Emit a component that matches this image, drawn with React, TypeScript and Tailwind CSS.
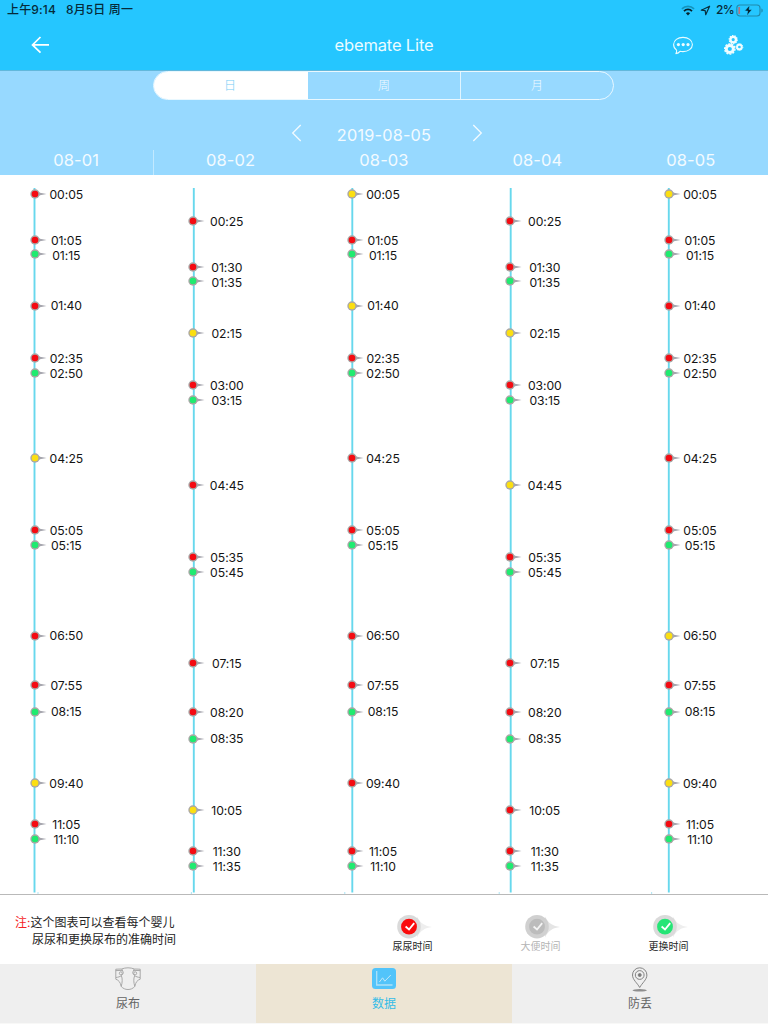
import React from "react";

type Kind = "pee" | "poo" | "change";
type Slot = { time: string; dot: number; text: number };

const FILL: Record<Kind, string> = { pee: "#f40b12", poo: "#fbdf12", change: "#1feb70" };

const CHART_TOP = 175;
const ROW = 14;

const slots = (rows: [string, number, number][]): Slot[] =>
  rows.map(([time, dot, text]) => ({ time, dot, text }));

const EARLY = slots([
  ["00:05", 193.5, 195], ["01:05", 240.3, 240.5], ["01:15", 254.3, 255.5],
  ["01:40", 306, 306], ["02:35", 358, 358.3], ["02:50", 373, 373.5],
  ["04:25", 458.2, 458.7], ["05:05", 530.3, 530.7], ["05:15", 545, 545.5],
  ["06:50", 635.6, 636], ["07:55", 685.3, 685.6], ["08:15", 711.6, 712],
  ["09:40", 782.6, 783.8], ["11:05", 824, 824.3], ["11:10", 838.6, 839.3],
]);

const EARLY_MID: Slot[] = [
  ...EARLY.slice(0, 13),
  ...slots([["11:05", 850.8, 851.2], ["11:10", 865.6, 866.2]]),
];

const LATE = slots([
  ["00:25", 220.7, 222], ["01:30", 267.3, 267.6], ["01:35", 281.4, 282.6],
  ["02:15", 332.8, 333.3], ["03:00", 385.1, 385.5], ["03:15", 400.1, 400.6],
  ["04:45", 485.3, 485.8], ["05:35", 557.2, 557.6], ["05:45", 572.1, 572.6],
  ["07:15", 662.8, 663.3], ["08:20", 712.3, 712.8], ["08:35", 738.6, 739.1],
  ["10:05", 809.6, 811], ["11:30", 850.8, 851.2], ["11:35", 865.6, 866.2],
]);

const CHANGES = [2, 5, 8, 11, 14];

// `left` is the centre of the axis, `label` the centre of the times beside it.
const COLUMNS = [
  { left: 34.5, label: 66, rows: EARLY, poo: [6, 12], foot: 38 },
  { left: 193.4, label: 226.5, rows: LATE, poo: [3, 12], foot: 191 },
  { left: 352.5, label: 382.7, rows: EARLY_MID, poo: [0, 3], foot: 345 },
  { left: 510.5, label: 544.5, rows: LATE, poo: [3, 6], foot: 499 },
  { left: 669.2, label: 699.7, rows: EARLY, poo: [0, 9, 12], foot: 652 },
];

function StatusBar() {
  return (
    <div className="flex h-5 items-center justify-between pl-[7px] pr-[5px] text-[#062b3a]">
      <div className="flex gap-[10px] text-[12px] font-medium leading-5 tracking-[0.15px]">
        <span>上午9:14</span>
        <span>8月5日 周一</span>
      </div>
      <div className="flex items-center">
        <svg width="14" height="11" viewBox="0 0 14 11" fill="none">
          <path d="M.9 3.9a8.7 8.7 0 0 1 12.2 0" stroke="#1593bd" strokeWidth="1.6" />
          <path d="M3 6.1a5.7 5.7 0 0 1 8 0" stroke="#07212b" strokeWidth="1.8" />
          <path d="M4.9 8.2a3 3 0 0 1 4.2 0L7 10.5z" fill="#07212b" />
        </svg>
        <svg className="ml-[5px]" width="11" height="11" viewBox="0 0 11 11" fill="none">
          <path d="M9.6 1.2 1.3 5.2l3.9.5.5 4z" stroke="#07303f" strokeWidth="1.2" strokeLinejoin="round" />
        </svg>
        <span className="ml-[5px] w-[17px] text-[12px] font-medium leading-5 tracking-[-0.6px]">2%</span>
        <svg className="ml-[3px]" width="27" height="13" viewBox="0 0 27 13" fill="none">
          <rect x=".8" y="1" width="23.2" height="11" rx="3" stroke="#2089ab" strokeWidth="1.1" />
          <path d="M3.2 3v7" stroke="#b57280" strokeWidth="1.7" />
          <path d="M25.4 4.5v4c1-.4 1.3-1 1.3-2s-.3-1.6-1.3-2z" fill="#2089ab" />
          <path d="M13.8 1 8.7 7h3l-1 5L16 5.500h-3z" fill="#07212b" stroke="#25c6ff" strokeWidth=".6" />
        </svg>
      </div>
    </div>
  );
}

function ChatIcon() {
  return (
    <svg className="mt-[2px]" width="22" height="20" viewBox="0 0 22 20" fill="none">
      <path d="M11 1.4c5.2 0 9.4 3 9.4 7.1s-4.2 7.1-9.4 7.1c-1.100 0-2.100-.1-3-.3-.9 1.200-2.300 2-4.100 2.300.6-.9.8-2 .7-3.500C2.700 12.800 1.600 10.800 1.600 8.500c0-4.100 4.200-7.100 9.400-7.100z" stroke="#e8fbff" strokeWidth="1.100" strokeLinejoin="round" />
      <g fill="#effcff"><circle cx="6.4" cy="8.6" r="1.6" /><circle cx="11.2" cy="8.6" r="1.6" /><circle cx="16" cy="8.6" r="1.6" /></g>
    </svg>
  );
}

function Gear({ x, y, r }: { x: number; y: number; r: number }) {
  return (
    <g>
      <circle cx={x} cy={y} r={r * 0.62} stroke="#effcff" strokeWidth={r * 0.52} />
      <circle cx={x} cy={y} r={r * 0.91} stroke="#effcff" strokeWidth={r * 0.24} pathLength={20} strokeDasharray="1.2 .8" />
    </g>
  );
}

function Header() {
  return (
    <header className="h-[71px] border-b border-[#62b8dc] bg-[#25c6ff]">
      <StatusBar />
      <div className="grid h-[50px] grid-cols-[1fr_auto_1fr] items-center">
        <svg className="ml-[31px]" width="19" height="18" viewBox="0 0 19 18" fill="none">
          <path d="M9.500 1 1.500 8.900l8 7.700M1.500 8.900H18" stroke="white" strokeWidth="1.700" />
        </svg>
        <h1 className="text-[16.5px] leading-none tracking-[-0.15px] text-[#ebfcff]">ebemate Lite</h1>
        <div className="flex items-center justify-end gap-[30px] pr-[24px]">
          <ChatIcon />
          <svg width="20" height="20" viewBox="0 0 20 20" fill="none">
            <Gear x={9.2} y={4.6} r={4.5} />
            <Gear x={5.8} y={14} r={5.7} />
            <Gear x={15.4} y={12} r={3.8} />
          </svg>
        </div>
      </div>
    </header>
  );
}

function Chevron({ flip = false }: { flip?: boolean }) {
  return (
    <svg width="11" height="18" viewBox="0 0 11 18" fill="none">
      <path d={flip ? "M1.3 1 9.3 9l-8 8" : "M9.7 1l-8 8 8 8"} stroke="#f3fbff" strokeWidth="1.3" />
    </svg>
  );
}

function DateSection() {
  return (
    <section className="flex h-[104px] flex-col items-center bg-[#97d9ff] text-[#f3fbff]">
      <div className="mr-px flex h-[29px] w-[461px] shrink-0 overflow-hidden rounded-[15px] border border-[#e9f8ff] text-[12px] font-light">
        <div className="flex flex-1 items-center justify-center bg-white pr-[2px] text-[#75cdf5]">日</div>
        <div className="flex flex-1 items-center justify-center border-r border-[#e1f5ff]">周</div>
        <div className="flex flex-1 items-center justify-center">月</div>
      </div>
      <div className="ml-[5px] mt-[24px] flex h-[26px] w-[192px] items-start justify-between">
        <Chevron />
        <span className="w-[115px] pr-[5px] pt-[2px] text-center text-[16.3px] leading-[18px] tracking-[0.2px]">2019-08-05</span>
        <Chevron flip />
      </div>
      <div className="flex h-[25px] w-full">
        {["08-01", "08-02", "08-03", "08-04", "08-05"].map((d, i) => (
          <div key={d} className={"flex-1 pt-px pr-px text-center text-[16.5px] leading-[18px] tracking-[0.1px]" + (i === 0 ? " border-r border-[#c2e9ff]" : "")}>{d}</div>
        ))}
      </div>
    </section>
  );
}

function TimelineColumn({ index }: { index: number }) {
  const { left, label, rows, poo, foot } = COLUMNS[index];
  const origin = index * 153.6;
  return (
    <div className="w-[153.6px] shrink-0">
      <svg className="-mb-[719px] block overflow-visible" width="150" height="719" fill="none">
        <path d={`M${left - origin} 13V717.5`} stroke="#67d8ed" strokeWidth="1.9" />
        <circle cx={foot - origin} cy="718" r=".7" fill="#8edaf0" />
      </svg>
      <div className="relative">
        {rows.map((row, i) => {
          const kind: Kind = CHANGES.includes(i) ? "change" : poo.includes(i) ? "poo" : "pee";
          const previous = i ? rows[i - 1].dot + ROW / 2 : CHART_TOP;
          return (
            <div key={row.time} className="flex h-[14px] items-center" style={{ marginTop: row.dot - previous - ROW / 2, paddingLeft: left - origin - 5 }}>
              <svg className="shrink-0" width="18" height="14" viewBox="0 0 18 14">
                <path d="M7 3.7 10 5.8 16.5 7 10 8.2 7 10.3z" fill="#a5a5ad" />
                <circle cx="5" cy="7" r="4.7" fill="#aaa7a6" />
                <circle cx="5" cy="7" r="3.3" fill={FILL[kind]} />
              </svg>
              <span className="w-10 shrink-0 text-center text-[12.2px] leading-[14px] tracking-[-0.08px] text-[#141414]" style={{ marginLeft: label - left - 32.7, paddingTop: (row.text - row.dot) * 2 + 0.8 }}>{row.time}</span>
            </div>
          );
        })}
      </div>
    </div>
  );
}

function Legend({ text, fill, muted = false }: { text: string; fill: string; muted?: boolean }) {
  return (
    <div className="flex w-[128px] flex-col items-center pl-px pt-[19px]">
      <svg className="ml-[3px]" width="37" height="26" viewBox="0 0 37 26" fill="none">
        <path d="M21 2.5c3.4 7.2 8 9.4 15 10.5-7 1-11.6 3.3-15 10.5z" fill={muted ? "#e5e5e5" : "#eeeeee"} />
        <circle cx="13" cy="12.700" r="11.8" fill={muted ? "#d0d0d0" : "#dadada"} />
        <circle cx="13" cy="12.700" r="7.9" fill={fill} />
        <path d="m9.6 12.5 3.400 3 5.200-6.400" stroke={muted ? "#f4f4f4" : "white"} strokeWidth="1.800" />
      </svg>
      <span className={"text-[10px] leading-[12px] " + (muted ? "text-[#b4b4b4]" : "text-[#252525]")}>{text}</span>
    </div>
  );
}

function Notes() {
  return (
    <section className="flex h-[70px] border-t border-[#b9b9b9] bg-white">
      <div className="w-[348px] pl-[15px] pt-[19px] text-[12px] leading-[17px] text-[#242424]">
        <p><span className="text-[#f52225]">注:</span>这个图表可以查看每个婴儿</p>
        <p className="pl-[17px]">尿尿和更换尿布的准确时间</p>
      </div>
      <Legend text="尿尿时间" fill="#fa0b0c" />
      <Legend text="大便时间" fill="#bcbcbc" muted />
      <Legend text="更换时间" fill="#25e576" />
    </section>
  );
}

function TabBar() {
  return (
    <nav className="flex h-[60px] border-b border-[#f8f8f7] text-[12px] leading-[18px] text-[#646464]">
      <div className="flex flex-1 flex-col items-center bg-[#efefef] pt-[3px]">
        <svg width="26" height="24" viewBox="0 0 26 24" fill="none" stroke="#a0a0a0" strokeWidth=".9">
          <path d="M.8 2.200 6.500 2C9 1.200 10.500.8 13 .8s4 .4 6.500 1.200l5.700.2v10c-3 1-4.500 3-5.400 7.200-2 2.200-4 3.100-6.800 3.100s-4.800-.9-6.800-3.100C5.300 15.200 3.800 13.200.8 12.200z" />
          <path d="M.8 3.600 7 3.400M25.200 3.600 19 3.400M1 10.500C5.500 10 8 8 8.300 5.500L6.800 2M25 10.500C20.500 10 18 8 17.700 5.500L19.200 2" />
          <path d="M6.200 19.400c1.300-4 1.300-8 .2-10.500M19.800 19.400c-1.300-4-1.300-8-.2-10.500" />
          <circle cx="5.800" cy="6.300" r="1.500" /><circle cx="20.200" cy="6.300" r="1.500" />
        </svg>
        <span className="mt-[4px]">尿布</span>
      </div>
      <div className="flex flex-1 flex-col items-center bg-[#ede5d4] pt-[3px] text-[#35bce7]">
        <svg width="24" height="24" viewBox="0 0 24 24" fill="none">
          <rect y="1" width="24" height="21" rx="3.5" fill="#52c4fa" />
          <path d="M4.700 4v14h15.800" stroke="#ade1f8" strokeWidth="1.300" />
          <path d="m7.400 15 3.200-4.200 2.200 3.400 6-6.200" stroke="#c2e8f7" strokeWidth="1" />
        </svg>
        <span className="mt-[4px]">数据</span>
      </div>
      <div className="flex flex-1 flex-col items-center bg-[#efefef] pt-[3px]">
        <svg width="18" height="26" viewBox="0 0 18 26" fill="none" stroke="#858585">
          <path d="M8.700 20.500C6.300 16 1.500 12.700 1.500 8a7.200 7.200 0 0 1 14.400 0c0 4.700-4.800 8-7.200 12.500z" />
          <circle cx="8.7" cy="8" r="4.400" /><circle cx="8.7" cy="8" r="1.500" fill="#777" />
          <ellipse cx="8.7" cy="23.300" rx="7.200" ry="1.300" fill="#8e8e8e" stroke="none" />
        </svg>
        <span className="mt-[2px]">防丢</span>
      </div>
    </nav>
  );
}

export default function App() {
  return (
    <main className="flex h-[1024px] w-[768px] flex-col overflow-hidden bg-white font-[Inter,'Noto_Sans_CJK_SC',sans-serif]">
      <Header />
      <DateSection />
      <div className="flex h-[719px] shrink-0">
        {COLUMNS.map((_, i) => <TimelineColumn key={i} index={i} />)}
      </div>
      <Notes />
      <TabBar />
    </main>
  );
}
